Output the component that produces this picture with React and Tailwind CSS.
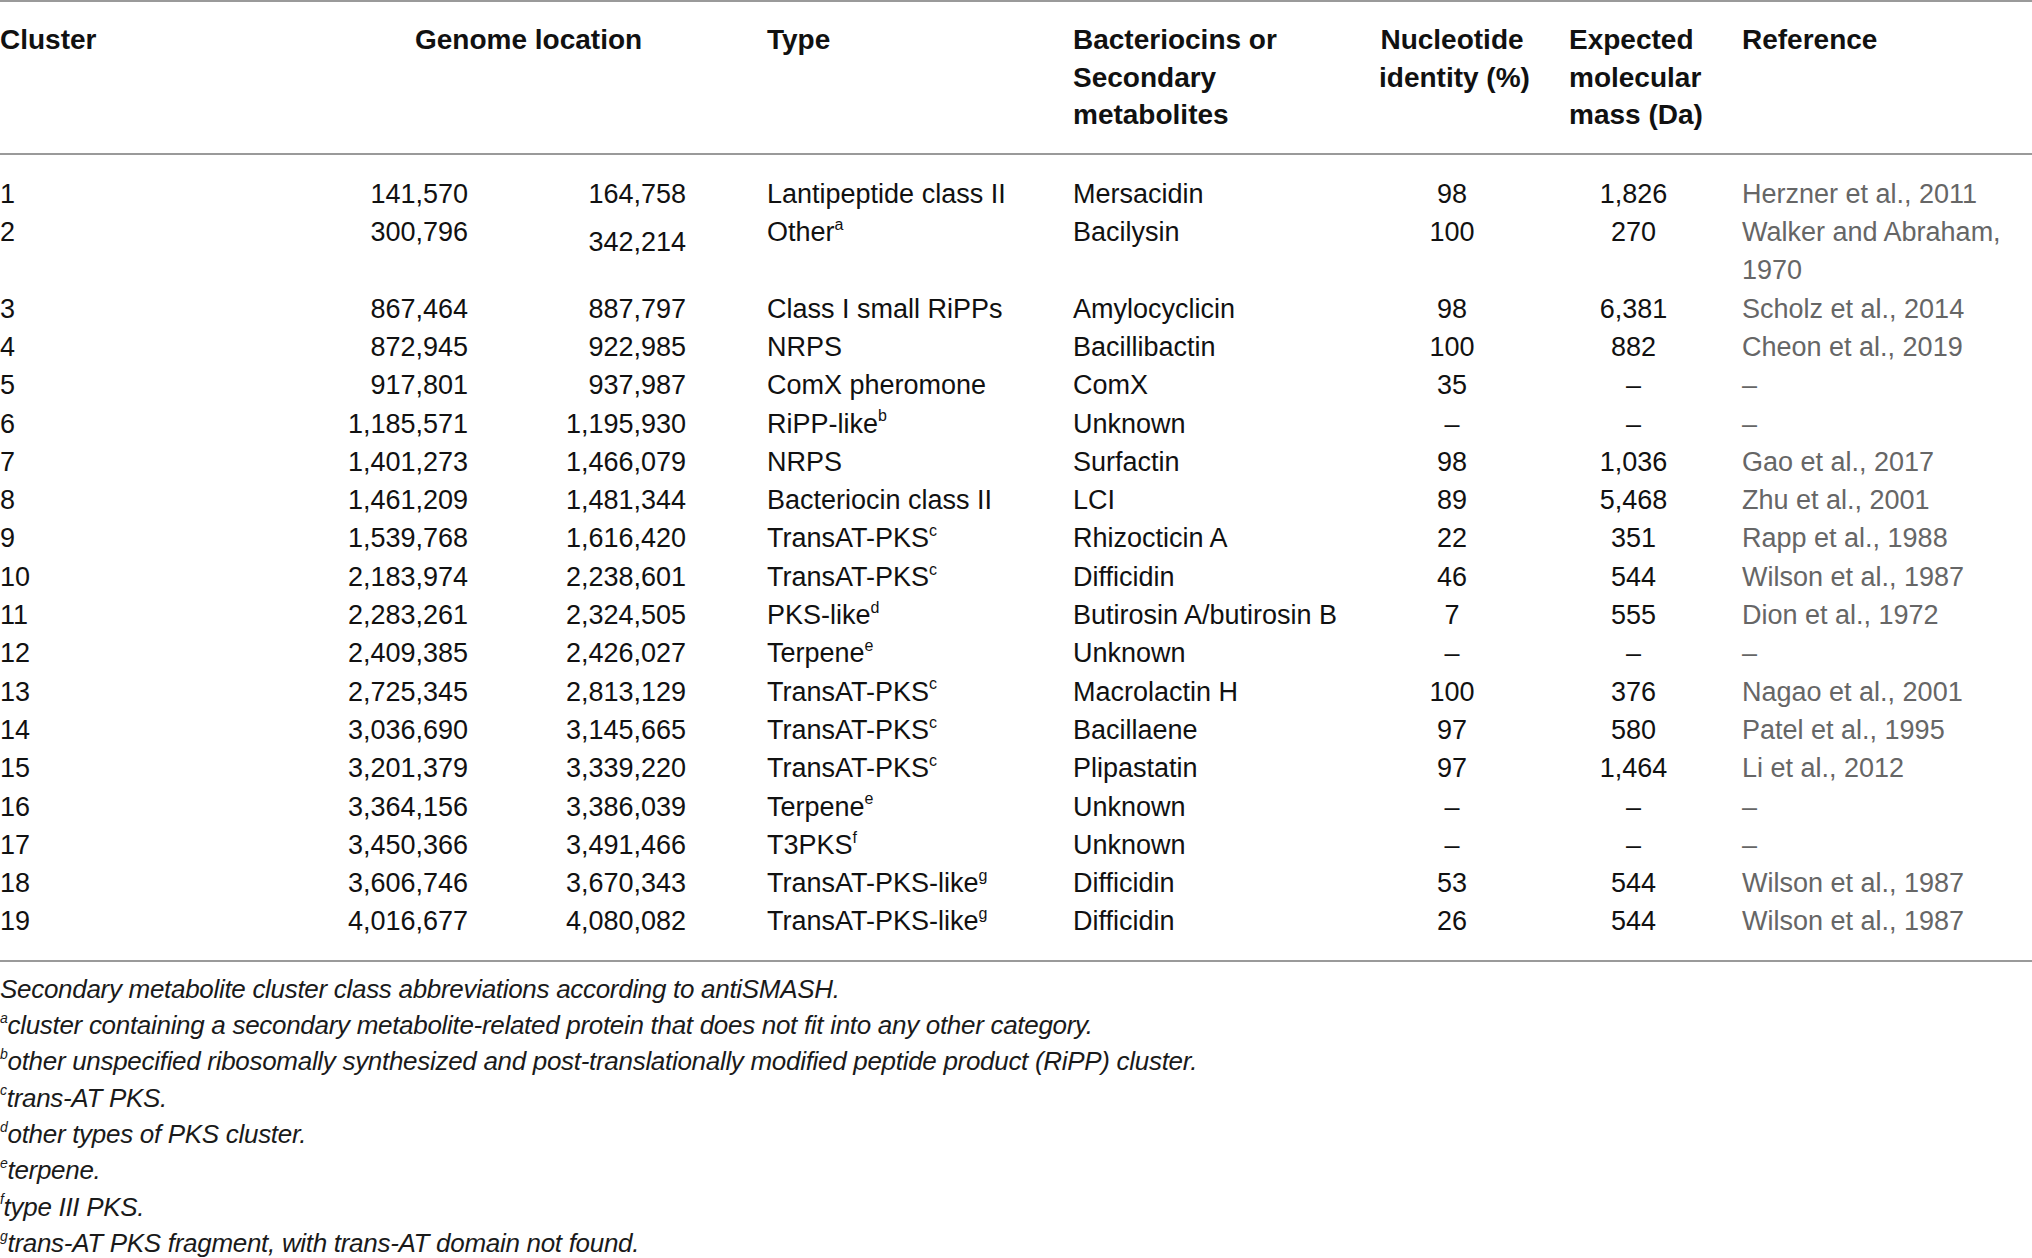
import React from "react";

const rows = [
  ["1", "141,570", "164,758", "Lantipeptide class II", null, "Mersacidin", "98", "1,826", "Herzner et al., 2011"],
  ["2", "300,796", "342,214", "Other", "a", "Bacilysin", "100", "270", "Walker and Abraham, 1970"],
  ["3", "867,464", "887,797", "Class I small RiPPs", null, "Amylocyclicin", "98", "6,381", "Scholz et al., 2014"],
  ["4", "872,945", "922,985", "NRPS", null, "Bacillibactin", "100", "882", "Cheon et al., 2019"],
  ["5", "917,801", "937,987", "ComX pheromone", null, "ComX", "35", "–", "–"],
  ["6", "1,185,571", "1,195,930", "RiPP-like", "b", "Unknown", "–", "–", "–"],
  ["7", "1,401,273", "1,466,079", "NRPS", null, "Surfactin", "98", "1,036", "Gao et al., 2017"],
  ["8", "1,461,209", "1,481,344", "Bacteriocin class II", null, "LCI", "89", "5,468", "Zhu et al., 2001"],
  ["9", "1,539,768", "1,616,420", "TransAT-PKS", "c", "Rhizocticin A", "22", "351", "Rapp et al., 1988"],
  ["10", "2,183,974", "2,238,601", "TransAT-PKS", "c", "Difficidin", "46", "544", "Wilson et al., 1987"],
  ["11", "2,283,261", "2,324,505", "PKS-like", "d", "Butirosin A/butirosin B", "7", "555", "Dion et al., 1972"],
  ["12", "2,409,385", "2,426,027", "Terpene", "e", "Unknown", "–", "–", "–"],
  ["13", "2,725,345", "2,813,129", "TransAT-PKS", "c", "Macrolactin H", "100", "376", "Nagao et al., 2001"],
  ["14", "3,036,690", "3,145,665", "TransAT-PKS", "c", "Bacillaene", "97", "580", "Patel et al., 1995"],
  ["15", "3,201,379", "3,339,220", "TransAT-PKS", "c", "Plipastatin", "97", "1,464", "Li et al., 2012"],
  ["16", "3,364,156", "3,386,039", "Terpene", "e", "Unknown", "–", "–", "–"],
  ["17", "3,450,366", "3,491,466", "T3PKS", "f", "Unknown", "–", "–", "–"],
  ["18", "3,606,746", "3,670,343", "TransAT-PKS-like", "g", "Difficidin", "53", "544", "Wilson et al., 1987"],
  ["19", "4,016,677", "4,080,082", "TransAT-PKS-like", "g", "Difficidin", "26", "544", "Wilson et al., 1987"],
];

const notes = [
  ["a", "cluster containing a secondary metabolite-related protein that does not fit into any other category."],
  ["b", "other unspecified ribosomally synthesized and post-translationally modified peptide product (RiPP) cluster."],
  ["c", "trans-AT PKS."],
  ["d", "other types of PKS cluster."],
  ["e", "terpene."],
  ["f", "type III PKS."],
  ["g", "trans-AT PKS fragment, with trans-AT domain not found."],
];

const cols = "grid grid-cols-[250px_218px_218px_387px_306px_146px_217px_290px]";

export default function App() {
  return (
    <div
      className="w-[2032px] h-[1258px] overflow-hidden bg-white text-[#111]"
      style={{ fontFamily: '"Liberation Sans", Arial, sans-serif' }}
    >
      <div className="border-t-2 border-[#9a9a9a]" />

      {/* header */}
      <div className={`${cols} pt-[19px] pb-[19px] text-[28px] font-bold leading-[37.6px]`}>
        <div>Cluster</div>
        <div className="col-span-2 pl-[165px]">Genome location</div>
        <div className="pl-[81px]">Type</div>
        <div>
          Bacteriocins or
          <br />
          Secondary
          <br />
          metabolites
        </div>
        <div className="text-center whitespace-nowrap">
          Nucleotide
          <br />
          identity (%)
        </div>
        <div className="pl-[44px]">
          Expected
          <br />
          molecular
          <br />
          mass (Da)
        </div>
        <div>Reference</div>
      </div>

      <div className="border-t-2 border-[#9a9a9a]" />

      {/* body */}
      <div className="pt-[20px] pb-[19px] text-[27px] leading-[38.3px]">
        {rows.map((r) => (
          <div key={r[0]} className={cols}>
            <div>{r[0]}</div>
            <div className="text-right">{r[1]}</div>
            <div className={r[0] === "2" ? "text-right pt-[10px]" : "text-right"}>{r[2]}</div>
            <div className="pl-[81px] whitespace-nowrap">
              {r[3]}
              {r[4] && <sup className="text-[16px] top-[-0.7em]">{r[4]}</sup>}
            </div>
            <div className="whitespace-nowrap">{r[5]}</div>
            <div className="text-center">{r[6]}</div>
            <div className="text-center">{r[7]}</div>
            <div className="text-[#666]">{r[8]}</div>
          </div>
        ))}
      </div>

      <div className="border-t-2 border-[#9a9a9a]" />

      {/* footnotes */}
      <div className="pt-[9px] text-[26px] italic leading-[36.3px] tracking-[-0.3px] text-[#1a1a1a]">
        <div>Secondary metabolite cluster class abbreviations according to antiSMASH.</div>
        {notes.map(([k, t]) => (
          <div key={k} className="whitespace-nowrap">
            <sup className="text-[14px] top-[-0.8em]">{k}</sup>
            {t}
          </div>
        ))}
      </div>
    </div>
  );
}
